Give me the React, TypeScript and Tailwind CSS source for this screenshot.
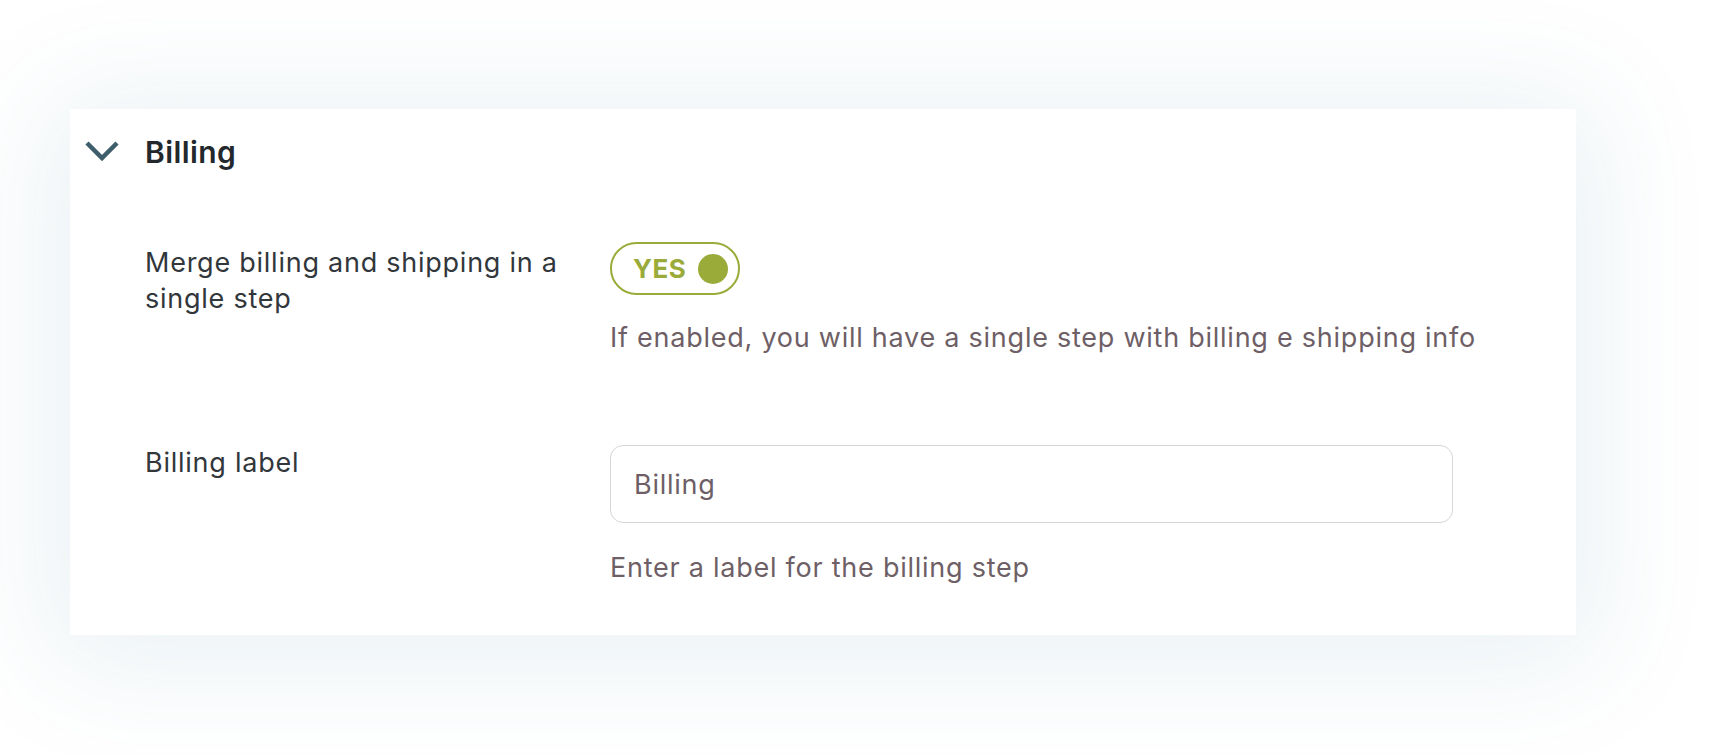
import React from 'react';

const Chevron: React.FC = () => (
  <svg width="34" height="24" viewBox="0 0 34 24" fill="none">
    <path d="M2 3 L17 18 L32 3" stroke="#3e5e6b" strokeWidth="4.5" />
  </svg>
);

const Toggle: React.FC = () => (
  <button className="flex h-[53px] w-[130px] items-center rounded-full border-2 border-[#9aab3a] pl-[21px] pr-[10px]">
    <span className="text-[26px] font-bold leading-none tracking-[0.5px] text-[#9aab3a]">YES</span>
    <span className="ml-auto h-[30px] w-[30px] rounded-full bg-[#9aab3a]" />
  </button>
);

const App: React.FC = () => {
  return (
    <div className="min-h-[754px] bg-white pl-[70px] pt-[109px] font-['Inter',sans-serif]">
      <div className="w-[1506px] bg-white pb-[49px] shadow-[0_10px_110px_20px_rgba(50,120,150,0.1)]">
        <div className="flex h-[86px] items-center pl-[15px]">
          <Chevron />
          <h2 className="ml-[26px] text-[30px] font-semibold tracking-[0.4px] text-[#23282d]">Billing</h2>
        </div>

        <div className="grid grid-cols-[465px_843px] pl-[75px] pt-[47px] text-[27px] leading-[36px] tracking-[0.75px]">
          <div className="pr-[30px] pt-[3px] text-[#32373c]">Merge billing and shipping in a single step</div>
          <div>
            <Toggle />
            <p className="mt-[25px] whitespace-nowrap text-[#6e5f66]">
              If enabled, you will have a single step with billing e shipping info
            </p>
          </div>

          <div className="mt-[89px] text-[#32373c]">Billing label</div>
          <div className="mt-[89px]">
            <input
              defaultValue="Billing"
              className="h-[78px] w-full rounded-[13px] border-[1.5px] border-[#d6d6d6] px-[23px] text-[27px] tracking-[0.75px] text-[#6e5f66] outline-none"
            />
            <p className="mt-[27px] text-[#6e5f66]">Enter a label for the billing step</p>
          </div>
        </div>
      </div>
    </div>
  );
};

export default App;
